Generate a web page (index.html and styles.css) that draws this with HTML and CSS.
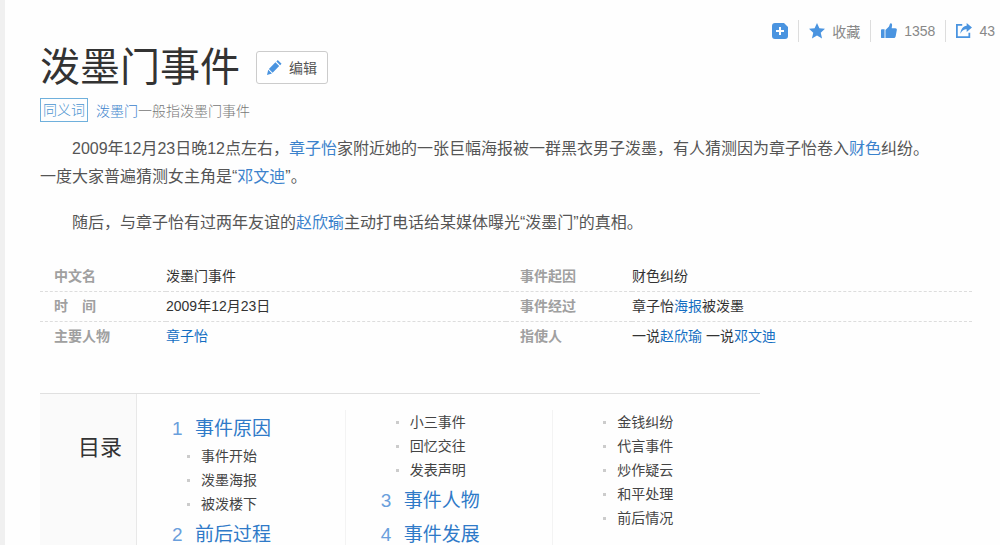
FILE: index.html
```html
<!DOCTYPE html>
<html lang="zh-CN">

<head>
  <meta charset="UTF-8">
  <meta name="viewport" content="width=device-width, initial-scale=1.0">
  <title>泼墨门事件</title>
  <link rel="stylesheet" href="styles.css">
</head>

<body>
  <main class="page">
    <div class="actions">
      <button class="action" type="button" aria-label="添加">
        <svg class="icon" viewBox="0 0 16 16"><path fill-rule="evenodd" d="M4 0h8l4 4v9a3 3 0 0 1-3 3H3a3 3 0 0 1-3-3V3a3 3 0 0 1 3-3zm3 4v3H4v2h3v3h2V9h3V7H9V4z"/></svg>
      </button>
      <button class="action" type="button">
        <svg class="icon" viewBox="0 0 18 18"><path d="M9 0l2.7 6 6.3.6-4.8 4.3 1.5 6.6L9 14l-5.700 3.500 1.500-6.600L0 6.600 6.300 6z"/></svg>
        收藏
      </button>
      <button class="action" type="button">
        <svg class="icon" viewBox="0 0 18 18"><path d="M1 7h3v10H1a1 1 0 0 1-1-1V8a1 1 0 0 1 1-1zM5 8l4-4 1-3c.3-1 2.500-1 2.500 1.500L12 6h4c1.500 0 2 1 1.800 2l-1.300 7c-.2 1.300-1 2-2.200 2H5z"/></svg>
        1358
      </button>
      <button class="action" type="button">
        <svg class="icon" viewBox="0 0 18 18"><path d="M12 0l6 5-6 5V7C9 7 7 8 5 12c0-5 3-8.500 7-9z"/><path class="icon-line" d="M7 2H1v14h14v-5"/></svg>
        43
      </button>
    </div>

    <header class="title-row">
      <h1>泼墨门事件</h1>
      <button class="edit-button" type="button">
        <svg class="pencil" viewBox="0 0 16 16"><path d="M10 1.500l1.500-1.500 4 4L14 5.500zM9 2.500L13 6.500 6 13.500 2 9.500zM1.300 10.500l4 4L0 16z"/></svg>
        编辑
      </button>
    </header>

    <div class="synonym">
      <span class="synonym-tag">同义词</span>
      <p><a href="#">泼墨门</a>一般指泼墨门事件</p>
    </div>

    <section class="summary">
      <p>2009年12月23日晚12点左右，<a href="#">章子怡</a>家附近她的一张巨幅海报被一群黑衣男子泼墨，有人猜测因为章子怡卷入<a href="#">财色</a>纠纷。一度大家普遍猜测女主角是“<a href="#">邓文迪</a>”。</p>
      <p>随后，与章子怡有过两年友谊的<a href="#">赵欣瑜</a>主动打电话给某媒体曝光“泼墨门”的真相。</p>
    </section>

    <table class="info">
      <tr>
        <th scope="row">中文名</th>
        <td>泼墨门事件</td>
        <th scope="row">事件起因</th>
        <td>财色纠纷</td>
      </tr>
      <tr>
        <th scope="row">时&emsp;间</th>
        <td>2009年12月23日</td>
        <th scope="row">事件经过</th>
        <td>章子怡<a href="#">海报</a>被泼墨</td>
      </tr>
      <tr>
        <th scope="row">主要人物</th>
        <td><a href="#">章子怡</a></td>
        <th scope="row">指使人</th>
        <td>一说<a href="#">赵欣瑜</a> 一说<a href="#">邓文迪</a></td>
      </tr>
    </table>

    <nav class="toc">
      <h2>目录</h2>
      <div class="toc-columns">
        <div class="toc-column">
          <h3><span>1</span><a href="#">事件原因</a></h3>
          <ul>
            <li><a href="#">事件开始</a></li>
            <li><a href="#">泼墨海报</a></li>
            <li><a href="#">被泼楼下</a></li>
          </ul>
          <h3><span>2</span><a href="#">前后过程</a></h3>
        </div>
        <div class="toc-column">
          <ul>
            <li><a href="#">小三事件</a></li>
            <li><a href="#">回忆交往</a></li>
            <li><a href="#">发表声明</a></li>
          </ul>
          <h3><span>3</span><a href="#">事件人物</a></h3>
          <h3><span>4</span><a href="#">事件发展</a></h3>
        </div>
        <div class="toc-column">
          <ul>
            <li><a href="#">金钱纠纷</a></li>
            <li><a href="#">代言事件</a></li>
            <li><a href="#">炒作疑云</a></li>
            <li><a href="#">和平处理</a></li>
            <li><a href="#">前后情况</a></li>
          </ul>
        </div>
      </div>
    </nav>
  </main>
</body>

</html>
```
FILE: styles.css
```css
* {
  box-sizing: border-box;
  margin: 0;
  padding: 0;
}

body {
  font-family: "Liberation Sans", "Noto Sans CJK SC", sans-serif;
  font-size: 14px;
  color: #333;
  background-color: #fefefe;
}

a {
  color: #3b82cc;
  text-decoration: none;
}

button {
  font: inherit;
  cursor: pointer;
}

.page {
  min-height: 100vh;
  padding: 20px 28px 0 35px;
  border-left: 5px solid #f0f0f0;
}

/* share bar */
.actions {
  display: flex;
  justify-content: flex-end;
  margin-right: -23px;
}

.action {
  display: flex;
  align-items: center;
  gap: 7px;
  height: 22px;
  padding: 0 10px;
  border: none;
  background: none;
  color: #888;
}

.action + .action {
  border-left: 1px solid #ddd;
}

.action:last-child {
  padding-right: 0;
}

.icon {
  width: 16px;
  height: 16px;
  fill: #4a94e0;
}

.icon-line {
  fill: none;
  stroke: #4a94e0;
  stroke-width: 2;
}

/* title */
.title-row {
  display: flex;
  align-items: center;
  gap: 16px;
  height: 50px;
}

h1 {
  font-size: 40px;
  font-weight: 400;
  line-height: 48px;
}

.edit-button {
  display: flex;
  align-items: center;
  gap: 7px;
  height: 33px;
  padding: 0 10px;
  border: 1px solid #ccc;
  border-radius: 3px;
  background-color: #fff;
  color: #555;
}

.pencil {
  width: 15px;
  height: 15px;
  fill: #4a94e0;
}

.synonym {
  display: flex;
  align-items: center;
  gap: 8px;
  margin-top: 6px;
  font-weight: 300;
  color: #777;
}

.synonym-tag {
  height: 24px;
  padding: 0 2px;
  border: 1px solid #6fb0dc;
  line-height: 22px;
  color: #4a94d0;
}

.summary {
  margin-top: 13px;
  padding-right: 30px;
  font-size: 16px;
  line-height: 28px;
  color: #555;
}

.summary p {
  margin-bottom: 18px;
  text-indent: 2em;
}

/* info table */
.info {
  width: 100%;
  margin-top: 24px;
  border-collapse: collapse;
  table-layout: fixed;
}

.info th,
.info td {
  height: 30px;
  text-align: left;
  line-height: 20px;
}

.info th {
  width: 126px;
  padding-left: 14px;
  color: #a0a0a0;
}

.info tr + tr {
  border-top: 1px dashed #ddd;
}

.info a {
  color: #136ec2;
}

/* table of contents */
.toc {
  display: flex;
  max-width: 720px;
  margin-top: 42px;
  border-top: 1px solid #e0e0e0;
}

.toc h2 {
  flex: none;
  width: 97px;
  padding: 37px 14px 0 0;
  border-right: 1px solid #e8e8e8;
  background-color: #fafafa;
  text-align: right;
  font-size: 22px;
  font-weight: 400;
  line-height: 34px;
}

.toc-columns {
  display: grid;
  grid-template-columns: repeat(3, 1fr);
  flex: 1;
  padding-top: 16px;
}

.toc-column {
  padding-left: 35px;
}

.toc-column + .toc-column {
  border-left: 1px solid #f3f3f3;
}

.toc h3 {
  display: flex;
  margin-top: 4px;
  font-size: 19px;
  font-weight: 400;
  line-height: 30px;
}

.toc h3 a {
  color: #2f7ac8;
}

.toc h3 span {
  width: 23px;
  color: #6a9fdc;
}

.toc ul {
  list-style: none;
}

.toc li {
  display: flex;
  align-items: center;
  gap: 11px;
  padding-left: 15px;
  line-height: 24px;
}

.toc li::before {
  content: "";
  width: 3px;
  height: 3px;
  background-color: #ccc;
}

.toc li a {
  color: #444;
}
```
